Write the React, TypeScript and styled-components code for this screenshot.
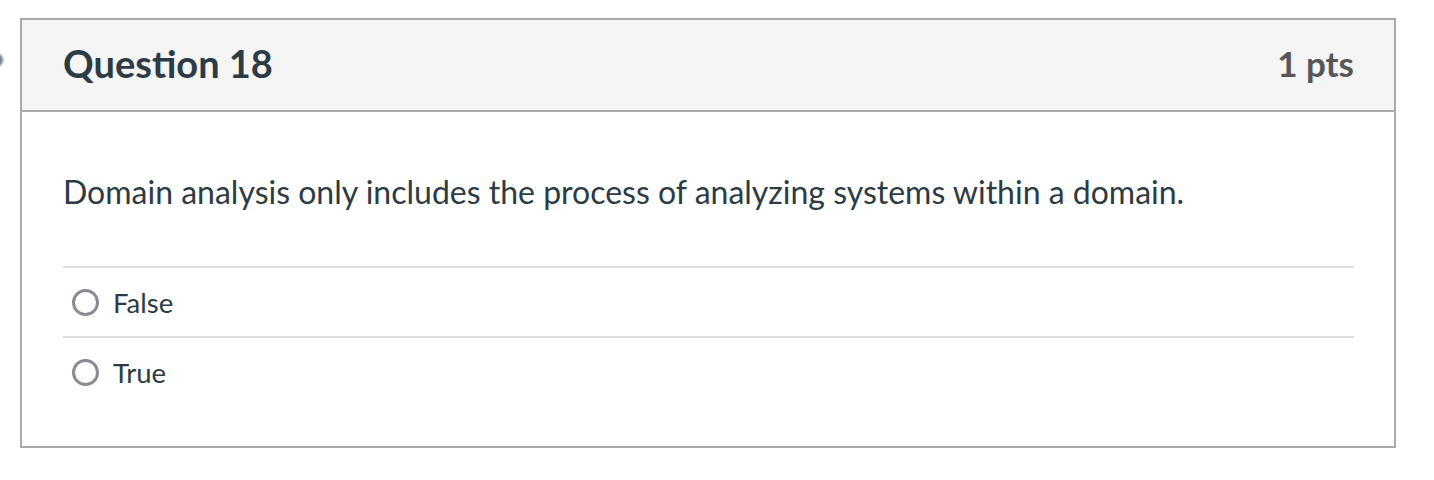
import styled, { createGlobalStyle } from 'styled-components';

const GlobalStyle = createGlobalStyle`
  html, body {
    margin: 0;
    padding: 0;
    background: #ffffff;
    font-family: Lato, "Liberation Sans", sans-serif;
  }
`;

const answers = ['False', 'True'];

export default function App(): JSX.Element {
  return (
    <>
      <GlobalStyle />
      <Page>
        <Marker />
        <Card>
          <Header>
            <Title>Question 18</Title>
            <Points>1 pts</Points>
          </Header>
          <Body>
            <QuestionText>
              Domain analysis only includes the process of analyzing systems within a domain.
            </QuestionText>
            <Answers>
              {answers.map((label) => (
                <Answer key={label}>
                  <Radio />
                  <AnswerLabel>{label}</AnswerLabel>
                </Answer>
              ))}
            </Answers>
          </Body>
        </Card>
      </Page>
    </>
  );
}

const Page = styled.div`
  position: relative;
  padding: 18px 0 0 20px;
  width: 1376px;
`;

const Marker = styled.span`
  position: absolute;
  left: -6px;
  top: 54px;
  width: 9px;
  height: 12px;
  border-radius: 50%;
  background: #6f8391;
  filter: blur(1px);
`;

const Card = styled.div`
  border: 2px solid #aaaaaa;
  box-sizing: border-box;
  width: 1376px;
`;

const Header = styled.div`
  display: flex;
  align-items: center;
  justify-content: space-between;
  box-sizing: border-box;
  height: 92px;
  padding: 0 40px 5px 41px;
  background: #f5f5f5;
  border-bottom: 2px solid #aaaaaa;
`;

const Title = styled.h2`
  margin: 0;
  font-size: 38px;
  font-weight: 700;
  color: #2d3b45;
`;

const Points = styled.div`
  font-size: 35px;
  font-weight: 700;
  color: #575757;
`;

const Body = styled.div`
  padding: 62px 40px 40px 41px;
`;

const QuestionText = styled.p`
  margin: 0 0 56px;
  font-size: 32px;
  line-height: 36px;
  color: #2d3b45;
`;

const Answers = styled.div`
  display: flex;
  flex-direction: column;
`;

const Answer = styled.label`
  display: flex;
  align-items: center;
  gap: 14px;
  height: 68px;
  padding-left: 9px;
  border-top: 2px solid #dddddd;
`;

const Radio = styled.span`
  box-sizing: border-box;
  width: 27px;
  height: 27px;
  border: 3px solid #8b8a94;
  border-radius: 50%;
  background: #ffffff;
`;

const AnswerLabel = styled.span`
  font-size: 27.5px;
  color: #2d3b45;
`;
